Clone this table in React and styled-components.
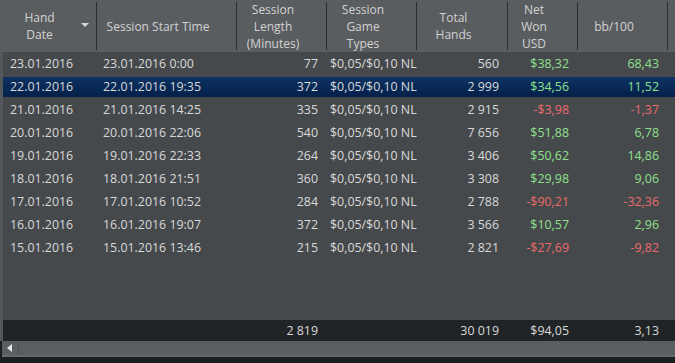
import styled, { createGlobalStyle } from "styled-components";

const Global = createGlobalStyle`
  html, body {
    margin: 0;
    padding: 0;
    background: #1c1e21;
  }
  * {
    box-sizing: border-box;
  }
`;

const Frame = styled.div`
  width: 675px;
  height: 363px;
  display: flex;
  flex-direction: column;
  background: #1c1e21;
  font-family: "Open Sans", "Noto Sans", sans-serif;
  font-size: 12px;
  color: #d9d9d9;
  overflow: hidden;
`;

const HeaderRow = styled.div`
  display: grid;
  grid-template-columns: 97px 140px 90px 90px 91px 70px 90px 1fr;
  height: 52px;
  background: #5a5d60;
  color: #d2d2d2;
`;

const HeadCell = styled.div`
  position: relative;
  display: flex;
  align-items: center;
  justify-content: center;
  text-align: center;
  line-height: 17px;
  padding-right: ${(p) => (p.$pad ? "18px" : "0")};

  &::after {
    content: "";
    display: ${(p) => (p.$last ? "none" : "block")};
    position: absolute;
    right: 0;
    top: 2px;
    bottom: 2px;
    width: 1px;
    background: #2a2c2f;
  }
`;

const SortArrow = styled.span`
  position: absolute;
  right: 8px;
  top: 23px;
  width: 0;
  height: 0;
  border-left: 4px solid transparent;
  border-right: 4px solid transparent;
  border-top: 4px solid #d6d6d6;
`;

const Body = styled.div`
  flex: 1;
  background: #46494c;
  border-left: 3px solid #53565a;
`;

const Row = styled.div`
  display: grid;
  grid-template-columns: 94px 140px 90px 90px 91px 70px 90px 1fr;
  height: 23px;
  align-items: center;
  font-size: 12.4px;
  background: ${(p) =>
    p.$selected
      ? "linear-gradient(to bottom, transparent 0 2px, #0d3262 2px, #04204a 22px, transparent 22px)"
      : "transparent"};
`;

const Cell = styled.div`
  white-space: nowrap;
  overflow: hidden;
  text-overflow: clip;
  padding: ${(p) => (p.$right ? "0 9px 0 0" : "0 0 0 " + (p.$indent || 7) + "px")};
  text-align: ${(p) => (p.$right ? "right" : "left")};
  color: ${(p) => (p.$tone === "pos" ? "#8fe08c" : p.$tone === "neg" ? "#ec6a6a" : "inherit")};
`;

const Footer = styled(Row)`
  height: 21px;
  background: #212427;
  border-left: 3px solid #53565a;
`;

const Scrollbar = styled.div`
  display: flex;
  height: 16px;
  margin-left: 2px;
  background: #5b5e61;
  border-bottom: 2px solid #66696c;
`;

const ScrollButton = styled.div`
  width: 17px;
  display: flex;
  align-items: center;
  justify-content: center;
  border-right: 1px solid #4b4e51;

  &::before {
    content: "";
    width: 0;
    height: 0;
    border-top: 4px solid transparent;
    border-bottom: 4px solid transparent;
    border-right: 5px solid #e6e6e6;
    margin-right: 2px;
  }
`;

const BottomBand = styled.div`
  height: 6px;
  background: #1c1e21;
`;

const rows = [
  ["23.01.2016", "23.01.2016 0:00", "77", "560", "$38,32", "68,43"],
  ["22.01.2016", "22.01.2016 19:35", "372", "2 999", "$34,56", "11,52"],
  ["21.01.2016", "21.01.2016 14:25", "335", "2 915", "-$3,98", "-1,37"],
  ["20.01.2016", "20.01.2016 22:06", "540", "7 656", "$51,88", "6,78"],
  ["19.01.2016", "19.01.2016 22:33", "264", "3 406", "$50,62", "14,86"],
  ["18.01.2016", "18.01.2016 21:51", "360", "3 308", "$29,98", "9,06"],
  ["17.01.2016", "17.01.2016 10:52", "284", "2 788", "-$90,21", "-32,36"],
  ["16.01.2016", "16.01.2016 19:07", "372", "3 566", "$10,57", "2,96"],
  ["15.01.2016", "15.01.2016 13:46", "215", "2 821", "-$27,69", "-9,82"],
];

const tone = (v) => (v.startsWith("-") ? "neg" : "pos");

export default function App() {
  return (
    <Frame>
      <Global />
      <HeaderRow>
        <HeadCell $pad>
          Hand
          <br />
          Date
          <SortArrow />
        </HeadCell>
        <HeadCell $pad>Session Start Time</HeadCell>
        <HeadCell $pad>
          Session
          <br />
          Length
          <br />
          (Minutes)
        </HeadCell>
        <HeadCell $pad>
          Session
          <br />
          Game
          <br />
          Types
        </HeadCell>
        <HeadCell $pad>
          Total
          <br />
          Hands
        </HeadCell>
        <HeadCell $pad>
          Net
          <br />
          Won
          <br />
          USD
        </HeadCell>
        <HeadCell $pad>bb/100</HeadCell>
        <HeadCell $last />
      </HeaderRow>
      <Body>
        {rows.map((r, i) => (
          <Row key={r[0]} $selected={i === 1}>
            <Cell>{r[0]}</Cell>
            <Cell $indent={6}>{r[1]}</Cell>
            <Cell $right>{r[2]}</Cell>
            <Cell $indent={3}>$0,05/$0,10 NL</Cell>
            <Cell $right>{r[3]}</Cell>
            <Cell $right $tone={tone(r[4])}>{r[4]}</Cell>
            <Cell $right $tone={tone(r[5])}>{r[5]}</Cell>
            <Cell />
          </Row>
        ))}
      </Body>
      <Footer>
        <Cell />
        <Cell />
        <Cell $right>2 819</Cell>
        <Cell />
        <Cell $right>30 019</Cell>
        <Cell $right>$94,05</Cell>
        <Cell $right>3,13</Cell>
        <Cell />
      </Footer>
      <Scrollbar>
        <ScrollButton />
      </Scrollbar>
      <BottomBand />
    </Frame>
  );
}
